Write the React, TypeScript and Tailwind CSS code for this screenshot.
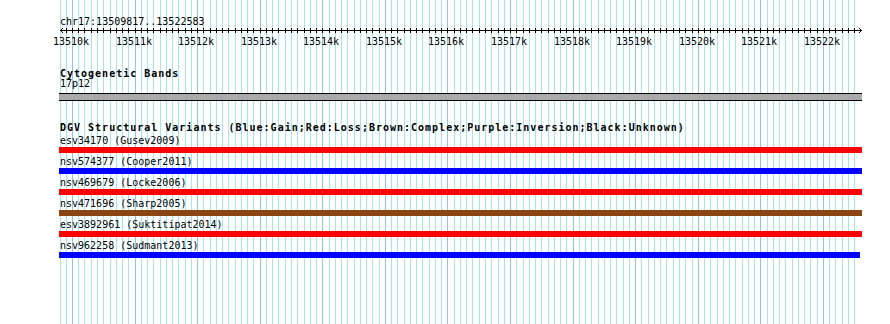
import React from 'react';

const START = 13509817;
const END = 13522583;
const PX_PER_BP = 0.062583;

const toX = (bp: number) => Math.round(60.5 + (bp - START) * PX_PER_BP);

// every 100bp inside the view
const minorStops: number[] = [];
for (let p = Math.ceil(START / 100) * 100; p <= END; p += 100) minorStops.push(p);

const majorStops = minorStops.filter((p) => p % 1000 === 0);

const variants = [
  { id: 'esv34170', study: 'Gusev2009', color: 'bg-[#ff0000]', width: 'w-[803px]' },
  { id: 'nsv574377', study: 'Cooper2011', color: 'bg-[#0000ff]', width: 'w-[803px]' },
  { id: 'nsv469679', study: 'Locke2006', color: 'bg-[#ff0000]', width: 'w-[803px]' },
  { id: 'nsv471696', study: 'Sharp2005', color: 'bg-[#8b4513]', width: 'w-[803px]' },
  { id: 'esv3892961', study: 'Suktitipat2014', color: 'bg-[#ff0000]', width: 'w-[803px]' },
  { id: 'nsv962258', study: 'Sudmant2013', color: 'bg-[#0000ff]', width: 'w-[801px]' },
];

const GridLines: React.FC = () => (
  <svg className="absolute inset-0" width={890} height={324} shapeRendering="crispEdges">
    <rect x={60} y={0} width={1} height={324} fill="#a3e6ef" />
    {minorStops.map((p) => (
      <rect
        key={p}
        x={toX(p)}
        y={0}
        width={1}
        height={324}
        fill={p % 1000 === 0 ? '#8cc6ea' : '#a3e6ef'}
      />
    ))}
  </svg>
);

const Ruler: React.FC = () => (
  <svg width={890} height={20} className="block" shapeRendering="crispEdges">
    <rect x={60} y={2} width={802} height={1} fill="#000" />
    {minorStops.map((p) => (
      <rect key={p} x={toX(p)} y={0} width={1} height={5} fill="#000" />
    ))}
    {/* end arrows */}
    <polyline points="63.5,-0.5 60.5,2.5 63.5,5.5" fill="none" stroke="#000" strokeWidth={1} />
    <polyline points="858.5,-0.5 861.5,2.5 858.5,5.5" fill="none" stroke="#000" strokeWidth={1} />
    {majorStops.map((p) => (
      <text
        key={p}
        x={toX(p) - 1}
        y={16.5}
        textAnchor="middle"
        fontFamily="'DejaVu Sans Mono', monospace"
        fontSize={10}
        fill="#000"
      >
        {p / 1000}k
      </text>
    ))}
  </svg>
);

const App: React.FC = () => {
  return (
    <div className="relative w-[890px] h-[324px] bg-white overflow-hidden">
      <GridLines />

      <div className="relative flex flex-col pt-[15px] font-['DejaVu_Sans_Mono',monospace] text-[10px] leading-[13px] text-black">
        {/* ruler */}
        <div className="pl-[60px] h-[13px]">chr17:13509817..13522583</div>
        <Ruler />

        {/* cytogenetic bands */}
        <div className="mt-[19px] pl-[60px] h-[10px] font-bold tracking-[1px] whitespace-nowrap">Cytogenetic Bands</div>
        <div className="pl-[60px] h-[13px]">17p12</div>
        <div className="mt-[3px] ml-[59px] w-[803px] h-[8px] border-y border-black bg-[#aaaaaa]" />

        {/* DGV track */}
        <div className="mt-[20px] pl-[60px] h-[13px] font-bold tracking-[1px] whitespace-nowrap">
          DGV Structural Variants (Blue:Gain;Red:Loss;Brown:Complex;Purple:Inversion;Black:Unknown)
        </div>
        <div className="flex flex-col gap-[2px]">
          {variants.map((v) => (
            <div key={v.id} className="flex flex-col">
              <div className="pl-[60px] h-[13px] whitespace-nowrap">
                {v.id} ({v.study})
              </div>
              <div className={`ml-[59px] h-[6px] ${v.width} ${v.color}`} />
            </div>
          ))}
        </div>
      </div>
    </div>
  );
};

export default App;
